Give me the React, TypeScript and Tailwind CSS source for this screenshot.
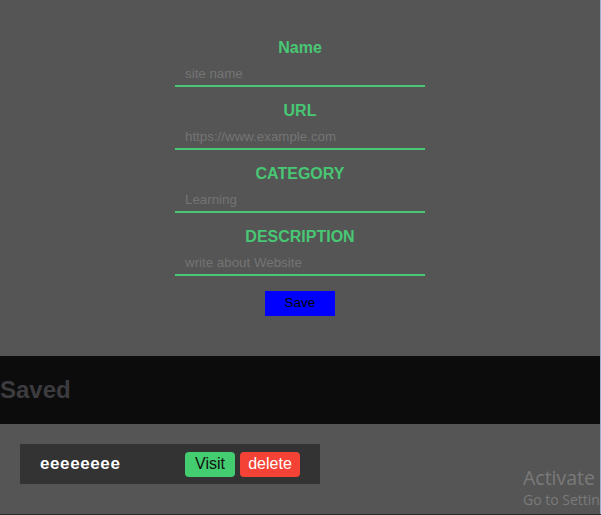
import React from "react";

const fields = [
  { label: "Name", placeholder: "site name" },
  { label: "URL", placeholder: "https://www.example.com" },
  { label: "CATEGORY", placeholder: "Learning" },
  { label: "DESCRIPTION", placeholder: "write about Website" },
];

export default function App() {
  return (
    <div
      className="relative h-[515px] w-[601px] overflow-hidden bg-[#555555]"
      style={{ fontFamily: '"Liberation Sans", Arial, sans-serif' }}
    >
      <div className="w-[600px]">
        <div className="flex flex-col items-center pt-[39px]">
          {fields.map((f, i) => (
            <div key={f.label} className={`flex flex-col items-center ${i > 0 ? "mt-[15px]" : ""}`}>
              <label className="h-[18px] text-[16px] font-bold leading-[18px] text-[#48c774]">{f.label}</label>
              <input
                placeholder={f.placeholder}
                className="mt-[1px] h-[29px] w-[250px] border-b-2 border-[#48c774] bg-transparent px-[10px] pt-[3px] text-[13.33px] text-white outline-none placeholder:text-[#747474]"
              />
            </div>
          ))}
          <button className="mt-[15px] h-[25px] w-[70px] bg-[#0000ff] text-[13.5px] text-black">Save</button>
        </div>

        <div className="mt-[40px] flex h-[68px] items-center bg-[#0c0c0c]">
          <h2 className="text-[24px] font-bold text-[#3c3c40]">Saved</h2>
        </div>

        <div className="ml-[20px] mt-[20px] flex h-[40px] w-[300px] items-center bg-[#333333] pl-[20px]">
          <span className="w-[145px] text-[17px] font-bold tracking-[0.6px] text-white">eeeeeeee</span>
          <button className="h-[25px] w-[50px] rounded-[4px] bg-[#44cc70] text-[16px] text-[#111]">Visit</button>
          <button className="ml-[5px] h-[25px] w-[60px] rounded-[4px] bg-[#f44336] text-[16px] text-white">delete</button>
        </div>
      </div>

      <div
        className="absolute left-[523px] top-[465px] whitespace-nowrap text-[#7a7a7a]"
        style={{ fontFamily: '"Open Sans", "Noto Sans", sans-serif' }}
      >
        <div className="text-[19.5px] leading-[25px]">Activate Windows</div>
        <div className="text-[14px] leading-[19px]">Go to Settings to activate Windows.</div>
      </div>

      <div className="absolute right-0 top-0 h-full w-[1px] bg-[#9aaecb]" />
      <div className="absolute bottom-0 left-0 h-[1px] w-full bg-[#2a2a2a]" />
    </div>
  );
}
